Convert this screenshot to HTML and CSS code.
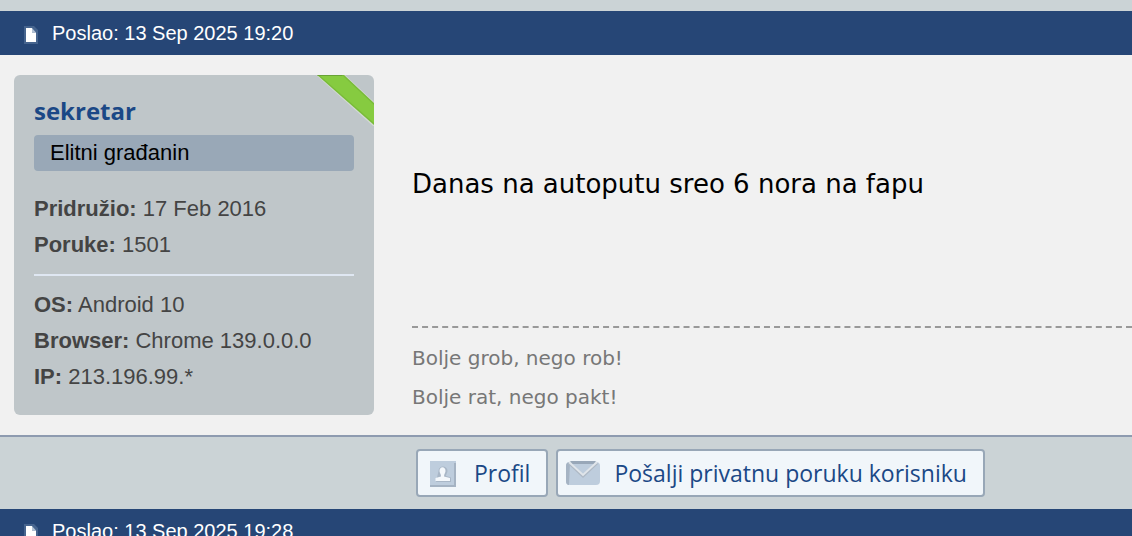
FILE: index.html
```html
<!DOCTYPE html>
<html lang="sr">

<head>
    <meta charset="UTF-8" />
    <meta name="viewport" content="width=device-width, initial-scale=1.0" />
    <title>Forum</title>
    <link rel="stylesheet" href="styles.css">
</head>

<body>
    <main class="topic">
        <article class="post">
            <header class="post-header">
                <svg class="post-icon" width="14" height="18" viewBox="0 0 14 18" aria-hidden="true">
                    <path d="M0 0h10l4 4v14H0z" fill="#6581a5" opacity=".5" />
                    <path d="M2 2h6v4.500h4V16H2z" fill="#fff" />
                    <path d="M8 2l4 4.500H8z" fill="#b5c3d5" />
                </svg>
                <span>Poslao: 13 Sep 2025 19:20</span>
            </header>

            <div class="post-body">
                <aside class="profile">
                    <svg class="ribbon" width="58" height="51" viewBox="0 0 58 51" aria-hidden="true">
                        <path d="M-1-1h29l30 28v24h-1z" fill="#d3dad2" />
                        <path d="M0-1h27l31 29v22z" fill="#79bb39" />
                        <path d="M2-1h23l33 31v18z" fill="#86cb40" />
                        <path d="M1 0h25l1 1H2z" fill="#68a336" />
                    </svg>
                    <a href="#" class="username">sekretar</a>
                    <div class="rank">Elitni građanin</div>
                    <ul class="details">
                        <li><b>Pridružio:</b> 17 Feb 2016</li>
                        <li><b>Poruke:</b> 1501</li>
                    </ul>
                    <ul class="details system">
                        <li><b>OS:</b> Android 10</li>
                        <li><b>Browser:</b> Chrome 139.0.0.0</li>
                        <li><b>IP:</b> 213.196.99.*</li>
                    </ul>
                </aside>

                <div class="content">
                    <p class="message">Danas na autoputu sreo 6 nora na fapu</p>
                    <div class="signature">
                        <p>Bolje grob, nego rob!</p>
                        <p>Bolje rat, nego pakt!</p>
                    </div>
                </div>
            </div>

            <footer class="post-footer">
                <a href="#" class="btn">
                    <svg class="btn-icon" width="38" height="30" viewBox="0 0 38 30" aria-hidden="true">
                        <path d="M6 3h26v26H6z" fill="#becddd" />
                        <path d="M6 27h26v2H6zM30 5h2v24h-2z" fill="#a5b3c3" />
                        <path d="M14.500 13c0-6 9-6 9 0 0 2-1.500 3-1.500 5l5 1.500V24H12z" fill="#a9b7c7" />
                        <path d="M15.500 13c0-5 6-5 6 0 0 2-1.500 3-1.500 5.500l6 1.500v3H11.500v-3l5.500-1.500c0-2.500-1.500-3.500-1.500-5.500z" fill="#f4f8fc" />
                    </svg>
                    <span>Profil</span>
                </a>
                <a href="#" class="btn">
                    <svg class="btn-icon" width="38" height="30" viewBox="0 0 38 30" aria-hidden="true">
                        <rect x="2" y="4" width="34" height="23" rx="4" fill="#becddd" />
                        <path d="M6 4Q2 4 2 8v15q0 4 3 4z" fill="#a5b3c3" />
                        <path d="M6 4l13 13L32 4z" fill="#becddd" />
                        <path d="M6 3h26l-2 3H8z" fill="#98a7b8" />
                        <path d="M5 5l14 13L33 5" fill="none" stroke="#aeb9c5" stroke-width="3" />
                        <path d="M5 4l14 13L33 4" fill="none" stroke="#e0e5ea" stroke-width="2" />
                    </svg>
                    <span>Pošalji privatnu poruku korisniku</span>
                </a>
            </footer>
        </article>

        <article class="post">
            <header class="post-header">
                <svg class="post-icon" width="14" height="18" viewBox="0 0 14 18" aria-hidden="true">
                    <path d="M0 0h10l4 4v14H0z" fill="#6581a5" opacity=".5" />
                    <path d="M2 2h6v4.500h4V16H2z" fill="#fff" />
                    <path d="M8 2l4 4.500H8z" fill="#b5c3d5" />
                </svg>
                <span>Poslao: 13 Sep 2025 19:28</span>
            </header>
        </article>
    </main>
</body>

</html>
```
FILE: styles.css
```css
* {
    box-sizing: border-box;
    margin: 0;
    padding: 0;
}

body {
    font-family: Arial, "Liberation Sans", sans-serif;
    background-color: #cbd3d6;
    color: #000;
}

a {
    color: #1b4886;
    text-decoration: none;
}

.topic {
    padding-top: 11px;
}

/* Blue bar with the date */
.post-header {
    display: flex;
    align-items: center;
    gap: 14px;
    height: 44px;
    padding: 0 24px;
    background-color: #264676;
    color: #fff;
    font-size: 20px;
}

.post-icon {
    margin-top: 4px;
}

.post-body {
    display: flex;
    align-items: flex-start;
    gap: 38px;
    padding: 20px 0 18px 14px;
    background-color: #f1f1f1;
    border-bottom: 2px solid #8e9bb0;
}

/* User box */
.profile {
    position: relative;
    flex: 0 0 360px;
    padding: 20px;
    background-color: #bfc6c9;
    border-radius: 6px;
    overflow: hidden;
    color: #444;
    font-size: 22px;
    line-height: 36px;
}

.ribbon {
    position: absolute;
    top: 0;
    right: 0;
}

.username {
    display: block;
    margin-bottom: 8px;
    font-family: "Open Sans", sans-serif;
    font-size: 24px;
    font-weight: 700;
    line-height: 32px;
}

.rank {
    margin-bottom: 20px;
    padding: 0 16px;
    background-color: #99a8b7;
    border-radius: 4px;
    color: #000;
}

.details {
    list-style: none;
}

.system {
    margin-top: 11px;
    padding-top: 11px;
    border-top: 2px solid #dfe7f2;
}

/* Message and signature */
.content {
    flex: 1;
    font-family: Verdana, "DejaVu Sans", sans-serif;
    line-height: 39px;
}

.message {
    padding: 90px 0 122px;
    font-size: 26px;
}

.signature {
    padding-top: 11px;
    border-top: 2px dashed #999;
    color: #777;
    font-size: 20px;
}

.post-footer {
    display: flex;
    gap: 8px;
    padding: 12px 16px 12px 416px;
}

.btn {
    display: flex;
    align-items: center;
    gap: 12px;
    height: 48px;
    padding: 0 16px 0 6px;
    background-color: #f1f6fa;
    border: 2px solid #98a7b7;
    border-radius: 4px;
    font-family: "Open Sans", sans-serif;
    font-size: 23px;
}
```
